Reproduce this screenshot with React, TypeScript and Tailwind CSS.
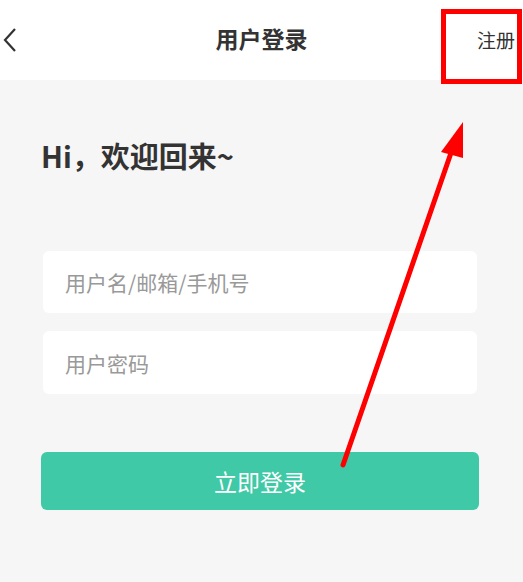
const font = { fontFamily: '"Noto Sans CJK SC", "Noto Sans", sans-serif' };

export default function App() {
  return (
    <div className="relative w-[523px] h-[582px] overflow-hidden bg-[#f6f6f6] text-[#333]" style={font}>
      {/* Header */}
      <div className="h-20 bg-white flex items-center justify-between">
        <button className="w-12 h-12 flex items-center text-[#333]">
          <svg width="20" height="26" viewBox="0 0 20 26" className="ml-[2px]">
            <polyline points="13,2 3,13 13,24" fill="none" stroke="currentColor" strokeWidth="2.2" />
          </svg>
        </button>
        <h1 className="text-[23px] font-bold leading-none -mt-1">用户登录</h1>
        <button className="w-12 text-[19px] leading-none text-[#333] text-right pr-2 -mt-0.5">注册</button>
      </div>

      {/* Body */}
      <div className="pl-[41px] pr-[44px]">
        <h2 className="mt-[61px] text-[29px] font-bold leading-none text-[#333]">Hi，欢迎回来~</h2>

        <div className="mt-[81px] flex flex-col gap-[18px] px-0.5">
          <input
            placeholder="用户名/邮箱/手机号"
            className="h-[62px] w-full rounded-md bg-white px-[22px] text-[21px] placeholder:text-[#999] outline-none"
          />
          <input
            placeholder="用户密码"
            type="password"
            className="h-[63px] w-full rounded-md bg-white px-[22px] text-[21px] placeholder:text-[#999] outline-none"
          />
        </div>

        <button className="mt-[58px] w-full h-[58px] rounded-md bg-[#3fc9a6] text-white text-[23px]">
          立即登录
        </button>
      </div>

      {/* Annotation overlay */}
      <svg className="absolute inset-0 pointer-events-none" width="523" height="582" viewBox="0 0 523 582">
        <rect x="443.5" y="11.5" width="76" height="70" fill="none" stroke="#f00" strokeWidth="5" />
        <line x1="343" y1="465" x2="452" y2="150" stroke="#f00" strokeWidth="5" strokeLinecap="round" />
        <polygon points="463,122 441,152 463,158" fill="#f00" />
      </svg>
    </div>
  );
}
